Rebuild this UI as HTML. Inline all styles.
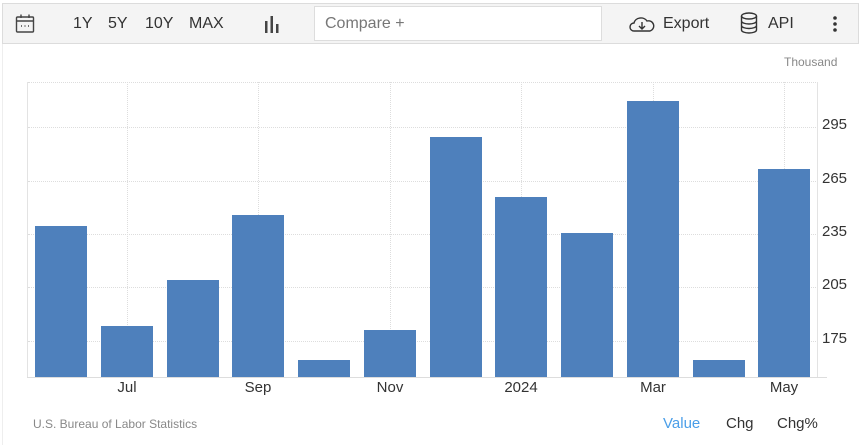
<!DOCTYPE html>
<html><head><style>
body{margin:0;width:859px;height:445px;background:#fff;font-family:"Liberation Sans",sans-serif;position:relative;overflow:hidden}
.a{position:absolute}
.tb{left:2px;top:3px;width:855px;height:39px;background:#f4f4f4;border:1px solid #dcdcdc}
.t{position:absolute;font-size:16px;color:#333;top:15px}
.bar{position:absolute;background:#4e80bc;width:52px;bottom:68px}
.yl{position:absolute;left:822px;font-size:15px;color:#333}
.xl{position:absolute;top:379px;font-size:15px;color:#333;width:60px;text-align:center}
.hg{position:absolute;left:28px;width:790px;border-top:1px dotted #ddd;height:0}
.vg{position:absolute;top:82px;height:295px;border-left:1px dotted #ddd;width:0}
</style></head><body>
<div class="a" style="left:2px;top:43px;width:1px;height:402px;background:#eee"></div>
<div class="a tb"></div>
<svg class="a" style="left:15px;top:13px" width="20" height="22" viewBox="0 0 20 22" fill="none" stroke="#444" stroke-width="1.4"><rect x="1.5" y="4" width="17" height="15" rx="1"/><line x1="1.5" y1="8" x2="18.5" y2="8"/><line x1="6" y1="1.5" x2="6" y2="5"/><line x1="14" y1="1.5" x2="14" y2="5"/><line x1="6" y1="13" x2="7" y2="13"/><line x1="9.5" y1="13" x2="10.5" y2="13"/><line x1="13" y1="13" x2="14" y2="13"/></svg>
<div class="t" style="left:73px">1Y</div>
<div class="t" style="left:108px">5Y</div>
<div class="t" style="left:145px">10Y</div>
<div class="t" style="left:189px">MAX</div>
<svg class="a" style="left:264px;top:15px" width="16" height="18"><rect x="1" y="6" width="2.5" height="12" fill="#444"/><rect x="6.5" y="1" width="2.5" height="17" fill="#444"/><rect x="12" y="9" width="2.5" height="9" fill="#444"/></svg>
<div class="a" style="left:314px;top:6px;width:286px;height:33px;background:#fff;border:1px solid #ddd"></div>
<div class="t" style="left:325px;color:#777">Compare +</div>
<svg class="a" style="left:629px;top:14px" width="26" height="20" viewBox="0 0 26 20" fill="none" stroke="#333" stroke-width="1.4"><path d="M7 17H5a4 4 0 0 1 0-8 7 6 0 0 1 13-2 5 5 0 0 1 3 10h-2z"/><path d="M13 8v7M10 12l3 3 3-3"/></svg>
<div class="t" style="left:663px">Export</div>
<svg class="a" style="left:740px;top:12px" width="18" height="22" viewBox="0 0 18 22" fill="none" stroke="#333" stroke-width="1.4"><ellipse cx="9" cy="4" rx="7.5" ry="3"/><path d="M1.5 4v14c0 1.7 3.4 3 7.5 3s7.5-1.3 7.5-3V4M1.5 9c0 1.7 3.4 3 7.5 3s7.5-1.3 7.5-3M1.5 13.5c0 1.7 3.4 3 7.5 3s7.5-1.3 7.5-3"/></svg>
<div class="t" style="left:768px">API</div>
<svg class="a" style="left:832px;top:16px" width="6" height="16"><circle cx="3" cy="2" r="1.8" fill="#333"/><circle cx="3" cy="8" r="1.8" fill="#333"/><circle cx="3" cy="14" r="1.8" fill="#333"/></svg>
<div class="a" style="left:784px;top:55px;font-size:12px;color:#888">Thousand</div>
<div class="hg" style="top:82px"></div><div class="hg" style="top:127px"></div><div class="hg" style="top:181px"></div><div class="hg" style="top:234px"></div><div class="hg" style="top:287px"></div><div class="hg" style="top:341px"></div>
<div class="vg" style="left:127px"></div><div class="vg" style="left:258px"></div><div class="vg" style="left:390px"></div><div class="vg" style="left:521px"></div><div class="vg" style="left:653px"></div><div class="vg" style="left:784px"></div>
<div class="a" style="left:27px;top:82px;width:1px;height:295px;background:#e3e3e3"></div>
<div class="a" style="left:817px;top:82px;width:1px;height:295px;background:#e3e3e3"></div>
<div class="a" style="left:27px;top:377px;width:800px;height:1px;background:#ddd"></div>
<div class="bar" style="left:35px;top:226px"></div>
<div class="bar" style="left:101px;top:326px"></div>
<div class="bar" style="left:167px;top:280px"></div>
<div class="bar" style="left:232px;top:215px"></div>
<div class="bar" style="left:298px;top:360px"></div>
<div class="bar" style="left:364px;top:330px"></div>
<div class="bar" style="left:430px;top:137px"></div>
<div class="bar" style="left:495px;top:197px"></div>
<div class="bar" style="left:561px;top:233px"></div>
<div class="bar" style="left:627px;top:101px"></div>
<div class="bar" style="left:693px;top:360px"></div>
<div class="bar" style="left:758px;top:169px"></div>
<div class="yl" style="top:116px">295</div><div class="yl" style="top:170px">265</div><div class="yl" style="top:223px">235</div><div class="yl" style="top:276px">205</div><div class="yl" style="top:330px">175</div>
<div class="xl" style="left:97px">Jul</div><div class="xl" style="left:228px">Sep</div><div class="xl" style="left:360px">Nov</div><div class="xl" style="left:491px">2024</div><div class="xl" style="left:623px">Mar</div><div class="xl" style="left:754px">May</div>
<div class="a" style="left:33px;top:417px;font-size:12px;color:#888">U.S. Bureau of Labor Statistics</div>
<div class="a" style="left:663px;top:415px;font-size:15px;color:#4a9ee8">Value</div>
<div class="a" style="left:726px;top:415px;font-size:15px;color:#333">Chg</div>
<div class="a" style="left:777px;top:415px;font-size:15px;color:#333">Chg%</div>
</body></html>
